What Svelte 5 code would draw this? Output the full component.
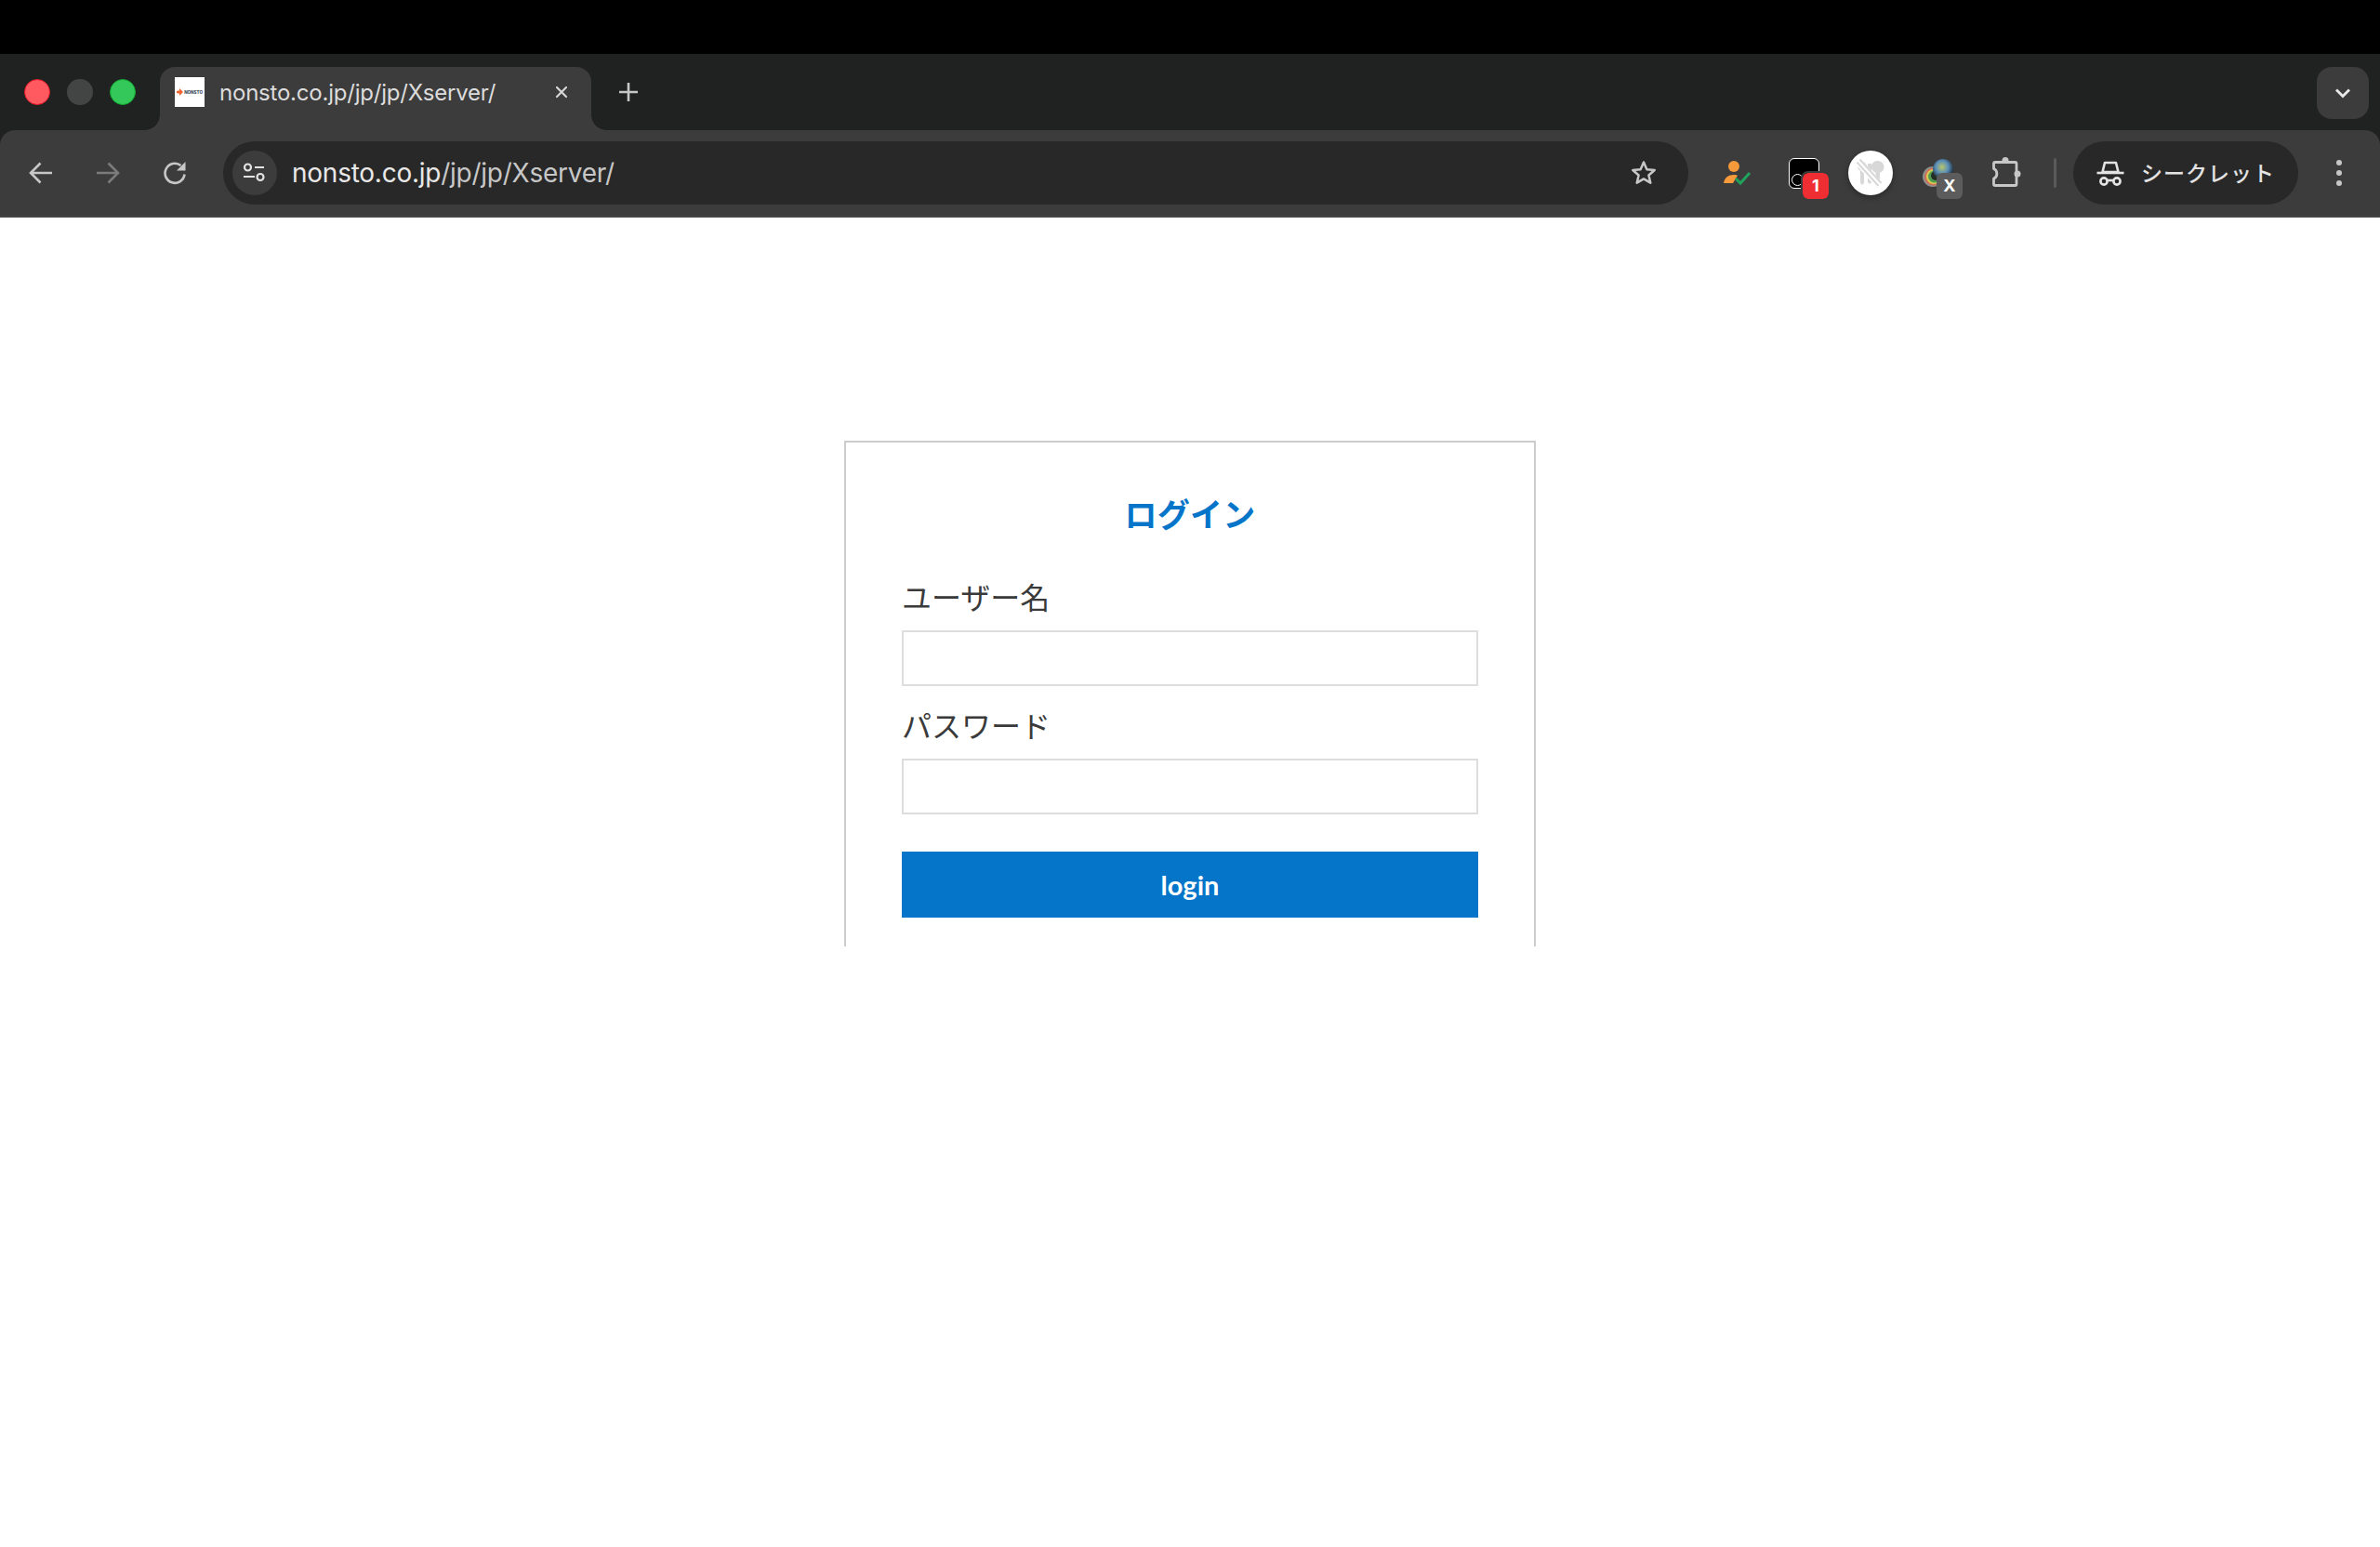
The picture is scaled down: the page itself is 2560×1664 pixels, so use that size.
<script>
    let username = $state("");
    let password = $state("");
</script>

<div class="topbar"></div>

<header class="chrome">
    <div class="tabstrip">
        <div class="lights">
            <span class="light red"></span>
            <span class="light grey"></span>
            <span class="light green"></span>
        </div>

        <div class="tab">
            <span class="favicon">
                <svg width="7" height="8" viewBox="0 0 7 8"><path d="M0 3h1.500V1.500L3 3 3 0l4 4-4 4V5L1.500 6.500V5H0z" fill="#f0652f" /></svg>
                <span class="favicon-text">NONSTO</span>
            </span>
            <span class="tab-title">nonsto.co.jp/jp/jp/Xserver/</span>
            <svg class="tab-close" width="14" height="14" viewBox="0 0 14 14">
                <path d="M2 2l10 10M12 2L2 12" stroke="#d6d6d6" stroke-width="2.200" stroke-linecap="round" />
            </svg>
        </div>

        <button class="new-tab" aria-label="新しいタブ">
            <svg width="22" height="22" viewBox="0 0 22 22">
                <path d="M11 1v20M1 11h20" stroke="#c7c7c7" stroke-width="2.600" />
            </svg>
        </button>

        <button class="tab-search" aria-label="タブを検索">
            <svg width="18" height="12" viewBox="0 0 18 12">
                <path d="M2 2.500l7 7 7-7" fill="none" stroke="#e8e8e8" stroke-width="2.800" />
            </svg>
        </button>
    </div>

    <div class="toolbar">
        <button class="nav" aria-label="戻る">
            <svg width="26" height="24" viewBox="0 0 26 24">
                <path d="M25 12H2M12.500 1.500L2 12l10.500 10.500" fill="none" stroke="#c7c7c7" stroke-width="2.600" />
            </svg>
        </button>
        <button class="nav" aria-label="進む">
            <svg width="26" height="24" viewBox="0 0 26 24">
                <path d="M1 12h23M13.500 1.500L24 12 13.500 22.500" fill="none" stroke="#7b7b7b" stroke-width="2.600" />
            </svg>
        </button>
        <button class="nav" aria-label="再読み込み">
            <svg width="26" height="26" viewBox="0 0 26 26">
                <path d="M23.500 14.500A10.500 10.500 0 1 1 19.500 5" fill="none" stroke="#c7c7c7" stroke-width="2.600" />
                <path d="M24.500 1v9.500H15z" fill="#c7c7c7" />
            </svg>
        </button>

        <div class="omnibox">
            <span class="site-info">
                <svg width="26" height="22" viewBox="0 0 26 22">
                    <circle cx="5.500" cy="5" r="3.500" fill="none" stroke="#e3e3e3" stroke-width="2.200" />
                    <path d="M13 5h10M1 15h12" stroke="#e3e3e3" stroke-width="2.200" />
                    <circle cx="19" cy="15.500" r="3.500" fill="none" stroke="#e3e3e3" stroke-width="2.200" />
                </svg>
            </span>
            <span class="url"><span class="host">nonsto.co.jp</span>/jp/jp/Xserver/</span>
            <svg class="star" width="30" height="30" viewBox="0 0 30 30">
                <path d="M15 3.500l3.400 7.700 8.300.8-6.300 5.500 1.900 8.200L15 21.400l-7.300 4.300 1.900-8.200L3.300 12l8.300-.8z" fill="none" stroke="#c7c7c7" stroke-width="2.500" stroke-linejoin="round" />
            </svg>
        </div>

        <div class="extensions">
            <button class="ext" aria-label="拡張機能">
                <svg width="32" height="28" viewBox="0 0 32 28">
                    <circle cx="13" cy="7" r="6" fill="#f79a3c" />
                    <path d="M2 25c1-6 5-9 11-9 2 0 3 .3 4 .8L12 25z" fill="#f79a3c" />
                    <path d="M15 20l5 5 10-11" fill="none" stroke="#1fa35c" stroke-width="3" />
                </svg>
            </button>
            <button class="ext" aria-label="拡張機能">
                <span class="black-icon"><span class="black-icon-dot"></span></span>
                <span class="ext-badge red-badge">1</span>
            </button>
            <button class="ext" aria-label="拡張機能">
                <span class="white-icon">
                    <svg width="32" height="32" viewBox="0 0 32 32">
                        <g fill="#d8d8d8">
                            <circle cx="7" cy="9" r="5" />
                            <path d="M5 10h4v17l-2 2-2-2z" />
                            <path d="M13 6h4v20l-2 2-2-2z" />
                            <path d="M24 3a6.500 6.500 0 0 1 2 12.700V27l-2 2-2.500-2V15.700A6.500 6.500 0 0 1 24 3z" />
                        </g>
                        <path d="M1 2l27 30" stroke="#fff" stroke-width="8" />
                        <path d="M1.500 4.500l23 25.500M4.500 1.500l23 25.500" stroke="#d8d8d8" stroke-width="2" />
                    </svg>
                </span>
            </button>
            <button class="ext" aria-label="拡張機能">
                <svg class="globe" width="36" height="36" viewBox="0 0 36 36">
                    <defs>
                        <radialGradient id="earth" cx="0.45" cy="0.4" r="0.62">
                            <stop offset="0" stop-color="#b9c76a" />
                            <stop offset="0.5" stop-color="#5b8fb8" />
                            <stop offset="1" stop-color="#16222c" />
                        </radialGradient>
                    </defs>
                    <circle cx="13" cy="24" r="11" fill="#8d918d" />
                    <circle cx="13.500" cy="24" r="9.500" fill="#cf6f5c" />
                    <circle cx="14" cy="24" r="8" fill="#d8cc50" />
                    <circle cx="14.500" cy="24" r="6.500" fill="#4f9c52" />
                    <circle cx="16" cy="23" r="5" fill="#262d25" />
                    <circle cx="24" cy="16" r="11" fill="url(#earth)" />
                </svg>
                <span class="ext-badge grey-badge">X</span>
            </button>
            <button class="ext" aria-label="拡張機能">
                <svg class="puzzle" width="32" height="34" viewBox="0 0 32 34">
                    <path d="M4 6.500H25.500A1.500 1.500 0 0 1 27 8V30a1.500 1.500 0 0 1-1.500 1.500H4A1.500 1.500 0 0 1 2.500 30V24C7 22.500 7 15.500 2.500 13.500V8A1.500 1.500 0 0 1 4 6.500z" fill="none" stroke="#c7c7c7" stroke-width="2.800" stroke-linejoin="round" />
                    <circle cx="15" cy="4.500" r="3.500" fill="#c7c7c7" />
                    <circle cx="28" cy="19" r="3.500" fill="#c7c7c7" />
                </svg>
            </button>
        </div>

        <span class="divider"></span>

        <div class="incognito">
            <svg width="30" height="27" viewBox="0 0 30 27">
                <path d="M9 2h12l2.500 10h-17z" fill="none" stroke="#e3e3e3" stroke-width="2.600" stroke-linejoin="round" />
                <path d="M0.500 13h29" stroke="#e3e3e3" stroke-width="2.600" />
                <circle cx="8" cy="22" r="3.600" fill="none" stroke="#e3e3e3" stroke-width="2.600" />
                <circle cx="22" cy="22" r="3.600" fill="none" stroke="#e3e3e3" stroke-width="2.600" />
                <path d="M11.500 21h7" stroke="#e3e3e3" stroke-width="2.600" />
            </svg>
            <span class="incognito-label">シークレット</span>
        </div>

        <button class="nav menu" aria-label="メニュー">
            <span class="dot"></span>
            <span class="dot"></span>
            <span class="dot"></span>
        </button>
    </div>
</header>

<main class="page">
    <form class="login-card" onsubmit={(e) => e.preventDefault()}>
        <h1 class="login-title">ログイン</h1>

        <label class="field-label" for="username">ユーザー名</label>
        <input id="username" class="field-input" type="text" bind:value={username} />

        <label class="field-label" for="password">パスワード</label>
        <input id="password" class="field-input" type="password" bind:value={password} />

        <button class="login-button" type="submit">login</button>
    </form>
</main>

<style>
    :global(body) {
        margin: 0;
        background: #fff;
        overflow: hidden;
    }

    button {
        padding: 0;
        border: none;
        background: none;
    }

    .topbar {
        height: 58px;
        background: #000;
    }

    .chrome {
        background: #202221;
        font-family: Inter, "Noto Sans CJK JP", sans-serif;
    }

    .tabstrip {
        display: flex;
        align-items: center;
        height: 82px;
    }

    .lights {
        display: flex;
        gap: 18px;
        margin: 0 26px;
    }

    .light {
        box-sizing: border-box;
        width: 28px;
        height: 28px;
        border-radius: 50%;
    }

    .red {
        background: #ff5a5f;
        border: 1px solid #e0182a;
    }

    .grey {
        background: #434544;
    }

    .green {
        background: #34c759;
        border: 1px solid #0ea82e;
    }

    .tab {
        position: relative;
        box-sizing: border-box;
        display: flex;
        align-items: center;
        align-self: flex-end;
        width: 464px;
        height: 68px;
        padding: 0 25px 14px 16px;
        background: #3c3c3c;
        border-radius: 16px 16px 0 0;
    }

    .tab::before,
    .tab::after {
        content: "";
        position: absolute;
        bottom: 0;
        width: 16px;
        height: 16px;
    }

    .tab::before {
        left: -16px;
        background: radial-gradient(circle at 0 0, transparent 15.500px, #3c3c3c 16px);
    }

    .tab::after {
        right: -16px;
        background: radial-gradient(circle at 100% 0, transparent 15.500px, #3c3c3c 16px);
    }

    .favicon {
        display: flex;
        align-items: center;
        justify-content: center;
        gap: 1px;
        flex-shrink: 0;
        width: 32px;
        height: 32px;
        background: #fff;
    }

    .favicon-text {
        font-size: 4.500px;
        font-weight: 800;
        color: #3d4a5c;
    }

    .tab-title {
        flex: 1;
        margin: 2px 0 0 16px;
        font-size: 24px;
        letter-spacing: -0.22px;
        line-height: 34px;
        color: #dcdcdc;
        white-space: nowrap;
    }

    .tab-close {
        flex-shrink: 0;
    }

    .new-tab {
        display: flex;
        align-items: center;
        justify-content: center;
        width: 48px;
        height: 48px;
        margin-left: 16px;
    }

    .tab-search {
        display: flex;
        align-items: center;
        justify-content: center;
        width: 56px;
        height: 56px;
        margin: 2px 12px 0 auto;
        background: #3c3c3c;
        border-radius: 16px;
    }

    .toolbar {
        box-sizing: border-box;
        display: flex;
        align-items: center;
        height: 94px;
        padding: 0 22px;
        background: #3c3c3c;
        border-bottom: 2px solid #454545;
        border-radius: 16px 16px 0 0;
    }

    .nav {
        display: flex;
        align-items: center;
        justify-content: center;
        flex-shrink: 0;
        width: 44px;
        height: 44px;
    }

    .nav + .nav {
        margin-left: 28px;
    }

    .omnibox {
        box-sizing: border-box;
        display: flex;
        align-items: center;
        flex: 1;
        height: 68px;
        margin-left: 30px;
        padding: 0 33px 0 10px;
        background: #282828;
        border-radius: 34px;
    }

    .site-info {
        display: flex;
        align-items: center;
        justify-content: center;
        flex-shrink: 0;
        width: 48px;
        height: 48px;
        background: #3c3c3c;
        border-radius: 50%;
    }

    .url {
        flex: 1;
        margin-left: 16px;
        font-size: 28px;
        letter-spacing: -0.25px;
        color: #c7c7c7;
        white-space: nowrap;
    }

    .host {
        color: #e8e8e8;
    }

    .extensions {
        display: flex;
        margin-left: 16px;
    }

    .ext {
        position: relative;
        display: flex;
        align-items: center;
        justify-content: center;
        width: 72px;
        height: 68px;
    }

    .black-icon {
        position: relative;
        box-sizing: border-box;
        width: 33px;
        height: 33px;
        background: #000;
        border: 1.500px solid #fff;
        border-radius: 6px;
    }

    .black-icon-dot {
        position: absolute;
        left: 2px;
        bottom: 2px;
        box-sizing: border-box;
        width: 13px;
        height: 13px;
        border: 1.500px solid #fff;
        border-radius: 50%;
    }

    .ext-badge {
        position: absolute;
        left: 35px;
        top: 34px;
        width: 28px;
        height: 28px;
        border-radius: 6px;
        outline: 2px solid #3c3c3c;
        font-family: Inter, sans-serif;
        font-size: 18px;
        font-weight: 700;
        line-height: 28px;
        text-align: center;
        color: #fff;
    }

    .red-badge {
        background: #ee2e33;
    }

    .grey-badge {
        background: #5c5c5c;
        outline: none;
    }

    .white-icon {
        display: flex;
        align-items: center;
        justify-content: center;
        width: 48px;
        height: 48px;
        background: #fff;
        border-radius: 50%;
        box-shadow: 0 2px 6px rgba(0, 0, 0, 0.35);
    }

    .globe {
        transform: translate(0, -2px);
    }

    .puzzle {
        transform: translate(2px, -1px);
    }

    .divider {
        flex-shrink: 0;
        width: 3px;
        height: 32px;
        margin: 0 18px 0 17px;
        background: #5a5a5a;
        border-radius: 2px;
    }

    .incognito {
        box-sizing: border-box;
        display: flex;
        align-items: center;
        gap: 18px;
        flex-shrink: 0;
        width: 242px;
        height: 68px;
        padding-left: 25px;
        background: #282828;
        border-radius: 34px;
        font-size: 23px;
        letter-spacing: 1px;
        color: #e3e3e3;
        white-space: nowrap;
    }

    .incognito-label {
        margin-bottom: 2px;
        font-weight: 500;
    }

    .nav.menu {
        flex-direction: column;
        gap: 5px;
        margin-left: 22px;
    }

    .dot {
        width: 6px;
        height: 6px;
        background: #c7c7c7;
        border-radius: 50%;
    }

    .login-card {
        box-sizing: border-box;
        display: flex;
        flex-direction: column;
        width: 744px;
        height: 544px;
        margin: 240px auto 0;
        padding: 50px 60px 0;
        border: 2px solid #ccc;
        border-bottom: none;
        font-family: "Noto Sans CJK JP", sans-serif;
    }

    .login-title {
        margin: 0 0 40px;
        font-size: 35px;
        font-weight: 700;
        line-height: 52px;
        letter-spacing: 0.2px;
        text-align: center;
        color: #0475c9;
    }

    .field-label {
        height: 46px;
        margin-bottom: 14px;
        font-size: 32px;
        font-weight: 400;
        line-height: 46px;
        color: #3a3a3a;
    }

    .field-input {
        box-sizing: border-box;
        flex-shrink: 0;
        width: 620px;
        height: 60px;
        margin: 0 0 18px;
        padding: 0 10px;
        background: #fff;
        border: 2px solid #ddd;
        border-radius: 0;
        outline: none;
    }

    .login-button {
        flex-shrink: 0;
        width: 620px;
        height: 71px;
        margin-top: 22px;
        background: #0475c9;
        font-family: Lato, sans-serif;
        font-size: 29px;
        font-weight: 700;
        color: #fff;
    }
</style>
